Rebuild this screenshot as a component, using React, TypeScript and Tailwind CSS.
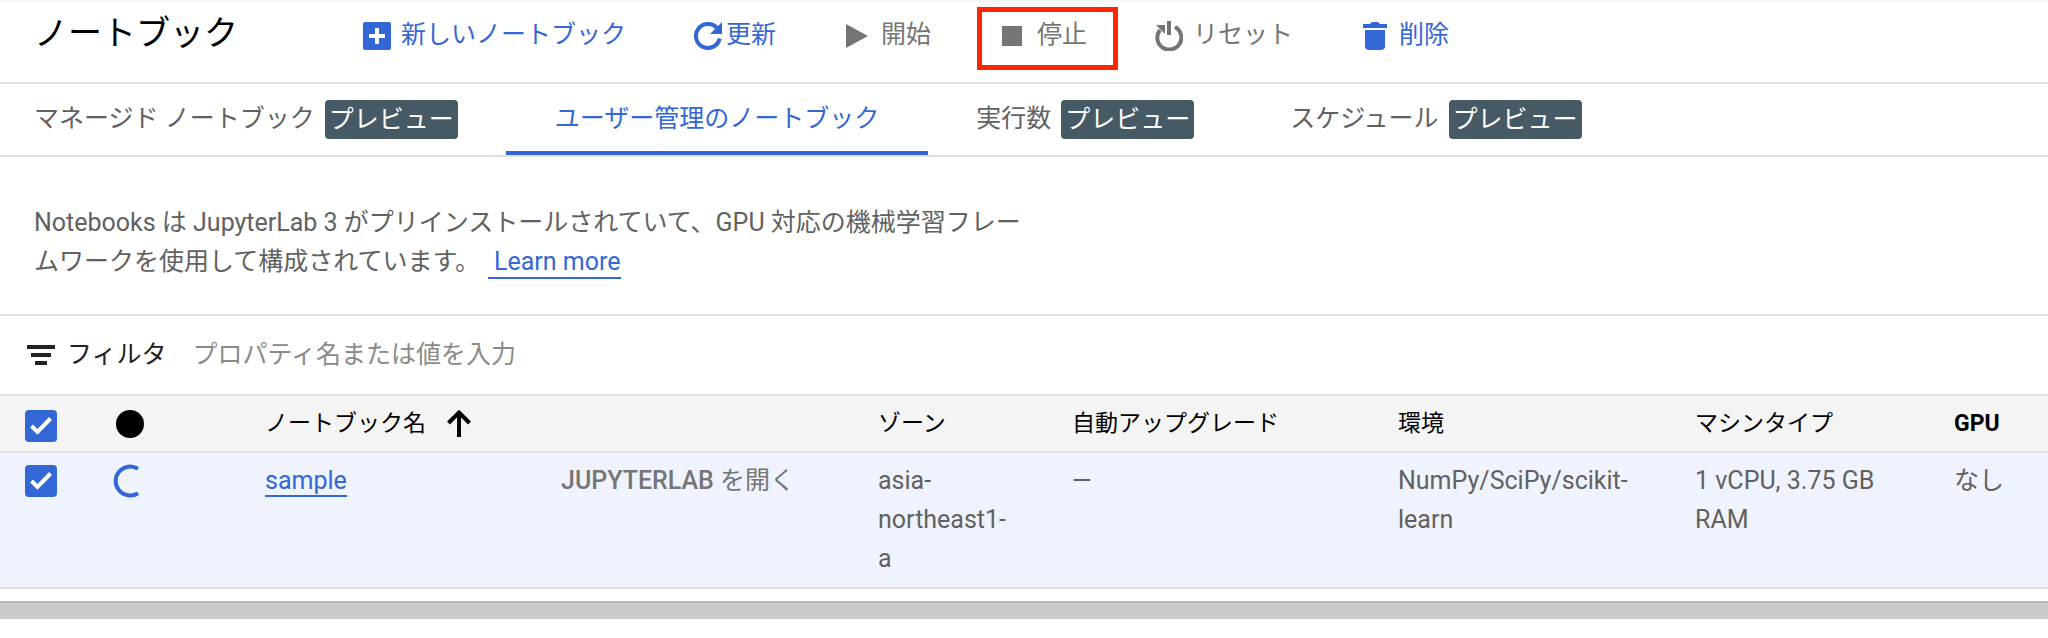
import { useState } from "react";
import type { ReactNode } from "react";

type Tab = {
  id: string;
  label: string;
  preview: boolean;
  className: string;
};

type Notebook = {
  name: string;
  zone: string;
  autoUpgrade: string;
  environment: string;
  machineType: string;
  gpu: string;
};

const TABS: Tab[] = [
  { id: "managed", label: "マネージド ノートブック", preview: true, className: "pl-[34px] pr-12" },
  { id: "user", label: "ユーザー管理のノートブック", preview: false, className: "px-[49px]" },
  { id: "executions", label: "実行数", preview: true, className: "px-12" },
  { id: "schedules", label: "スケジュール", preview: true, className: "px-12" }
];

const NOTEBOOKS: Notebook[] = [
  {
    name: "sample",
    zone: "asia-northeast1-a",
    autoUpgrade: "—",
    environment: "NumPy/SciPy/scikit-learn",
    machineType: "1 vCPU, 3.75 GB RAM",
    gpu: "なし"
  }
];

function AddBoxIcon() {
  return (
    <svg width="28" height="28" viewBox="0 0 28 28" aria-hidden="true">
      <rect width="28" height="28" rx="2" fill="currentColor" />
      <path d="M14 6v16M6 14h16" stroke="#fff" strokeWidth="4" />
    </svg>
  );
}

function RefreshIcon() {
  return (
    <svg width="28" height="28" viewBox="0 0 28 28" aria-hidden="true">
      <path d="M23 6A12 12 0 1 0 25.700 16.500" fill="none" stroke="currentColor" strokeWidth="4" />
      <path d="M28 0v12H16z" fill="currentColor" />
    </svg>
  );
}

function PlayIcon() {
  return (
    <svg width="22" height="24" viewBox="0 0 22 24" fill="currentColor" aria-hidden="true">
      <path d="M0 0l22 12L0 24z" />
    </svg>
  );
}

function StopIcon() {
  return (
    <svg width="20" height="20" viewBox="0 0 20 20" fill="currentColor" aria-hidden="true">
      <path d="M0 0h20v20H0z" />
    </svg>
  );
}

function ResetIcon() {
  return (
    <svg width="28" height="30" viewBox="0 0 28 30" aria-hidden="true">
      <path d="M5 9A12 12 0 1 0 20 6" fill="none" stroke="currentColor" strokeWidth="4" />
      <path d="M1 4h9v9z" fill="currentColor" />
      <path d="M14 0v14" stroke="currentColor" strokeWidth="4" />
    </svg>
  );
}

function DeleteIcon() {
  return (
    <svg width="24" height="28" viewBox="0 0 24 28" fill="currentColor" aria-hidden="true">
      <path d="M0 2h7l2-2h6l2 2h7v4H0z" />
      <path d="M2 8h20v16a4 4 0 0 1-4 4H6a4 4 0 0 1-4-4z" />
    </svg>
  );
}

function FilterIcon() {
  return (
    <svg width="28" height="20" viewBox="0 0 28 20" fill="currentColor" aria-hidden="true">
      <path d="M0 0h28v4H0zM4 8h20v4H4zM8 16h12v4H8z" />
    </svg>
  );
}

function SortIcon() {
  return (
    <svg width="24" height="27" viewBox="0 0 24 27" aria-hidden="true">
      <path d="M12 27V3M1.500 13L12 2.500 22.500 13" fill="none" stroke="currentColor" strokeWidth="4" />
    </svg>
  );
}

function Spinner() {
  return (
    <svg width="32" height="34" viewBox="0 0 32 34" role="img" aria-label="停止中">
      <path d="M25 4.800A14.500 14.500 0 1 0 25 29.200" fill="none" stroke="#3367d6" strokeWidth="4" />
    </svg>
  );
}

function Checkbox({ label, checked, onChange }: { label: string; checked: boolean; onChange: () => void }) {
  return (
    <span className="grid size-8">
      <input
        type="checkbox"
        aria-label={label}
        checked={checked}
        onChange={onChange}
        className="col-start-1 row-start-1 size-8 appearance-none rounded border-2 border-[#757575] bg-white checked:border-[#3367d6] checked:bg-[#3367d6]"
      />
      {checked && (
        <svg viewBox="0 0 32 32" className="pointer-events-none col-start-1 row-start-1 size-8" aria-hidden="true">
          <path d="M6.500 16l6 6L25.500 8.500" fill="none" stroke="#fff" strokeWidth="4" />
        </svg>
      )}
    </span>
  );
}

function ToolbarButton({
  icon,
  label,
  disabled = false,
  className
}: {
  icon: ReactNode;
  label: string;
  disabled?: boolean;
  className: string;
}) {
  return (
    <button
      type="button"
      disabled={disabled}
      className={`flex shrink-0 items-center whitespace-nowrap text-[#3367d6] disabled:text-[#757575] ${className}`}
    >
      {icon}
      <span className="pb-0.5">{label}</span>
    </button>
  );
}

export default function App() {
  const [activeTab, setActiveTab] = useState("user");
  const [filter, setFilter] = useState("");
  const [selected, setSelected] = useState<string[]>(["sample"]);

  const allSelected = selected.length === NOTEBOOKS.length;

  const toggle = (name: string) => {
    setSelected((prev) => (prev.includes(name) ? prev.filter((n) => n !== name) : [...prev, name]));
  };

  return (
    <main className="min-h-screen overflow-x-hidden bg-white font-[Roboto,'Noto_Sans_CJK_JP',sans-serif] text-[25px] leading-[39px] text-[#616161]">
      <header className="flex items-start border-t-2 border-b-2 border-t-[#f6f6f6] border-b-[#e0e0e0] pb-3">
        <h1 className="w-[363px] shrink-0 pt-1 pl-[34px] text-[34px] leading-[54px] whitespace-nowrap text-black">
          ノートブック
        </h1>
        <div className="flex items-start pt-[5px]">
          <div className="flex h-[63px] items-center pb-1.5">
            <ToolbarButton icon={<AddBoxIcon />} label="新しいノートブック" className="gap-[10px]" />
            <ToolbarButton icon={<RefreshIcon />} label="更新" className="ml-[68px] gap-1" />
            <ToolbarButton icon={<PlayIcon />} label="開始" disabled className="ml-[70px] gap-[13px]" />
          </div>
          <div className="ml-[46px] flex h-[63px] items-center border-[5px] border-[#ff2600] pr-[26px] pb-1.5 pl-5">
            <ToolbarButton icon={<StopIcon />} label="停止" disabled className="gap-[15px]" />
          </div>
          <div className="flex h-[63px] items-center pb-1.5">
            <ToolbarButton icon={<ResetIcon />} label="リセット" disabled className="ml-[37px] gap-[10px]" />
            <ToolbarButton icon={<DeleteIcon />} label="削除" className="ml-[70px] gap-3" />
          </div>
        </div>
      </header>

      <nav role="tablist" className="flex h-[73px] border-b-2 border-[#e0e0e0]">
        {TABS.map((tab) => (
          <button
            key={tab.id}
            type="button"
            role="tab"
            aria-selected={tab.id === activeTab}
            onClick={() => setActiveTab(tab.id)}
            className={`flex shrink-0 items-center gap-[10px] border-b-4 pt-1 whitespace-nowrap ${tab.className} ${
              tab.id === activeTab ? "border-[#3367d6] text-[#3367d6]" : "border-transparent"
            }`}
          >
            <span className="pb-0.5">{tab.label}</span>
            {tab.preview && <span className="rounded bg-[#455a64] px-1 text-white">プレビュー</span>}
          </button>
        ))}
      </nav>

      <p className="max-w-[1060px] px-[34px] pt-[46px] pb-[33px]">
        Notebooks は JupyterLab 3 がプリインストールされていて、GPU 対応の機械学習フレームワークを使用して構成されています。
        <a
          href="#learn-more"
          className="ml-2 inline-block border-b-2 border-[#3367d6] pl-1.5 leading-[30px] text-[#3367d6]"
        >
          Learn more
        </a>
      </p>

      <div className="flex h-20 items-center border-t-2 border-[#e0e0e0] pl-[27px]">
        <label htmlFor="filter" className="flex shrink-0 items-center gap-3 text-[#212121]">
          <FilterIcon />
          <span className="pb-0.5">フィルタ</span>
        </label>
        <input
          id="filter"
          type="text"
          value={filter}
          onChange={(e) => setFilter(e.target.value)}
          placeholder="プロパティ名または値を入力"
          className="ml-[26px] min-w-0 flex-1 pb-0.5 outline-none placeholder:text-[#8a8a8a]"
        />
      </div>

      <table className="w-full table-fixed border-collapse text-left">
        <colgroup>
          <col className="w-[113px]" />
          <col className="w-[152px]" />
          <col className="w-[296px]" />
          <col className="w-[317px]" />
          <col className="w-[194px]" />
          <col className="w-[326px]" />
          <col className="w-[297px]" />
          <col className="w-[259px]" />
          <col />
        </colgroup>
        <thead className="border-y-2 border-[#e0e0e0] bg-[#f4f4f4] text-[23px] text-black">
          <tr className="h-[57px] whitespace-nowrap">
            <th className="pt-1 pl-[25px]">
              <Checkbox
                label="すべて選択"
                checked={allSelected}
                onChange={() => setSelected(allSelected ? [] : NOTEBOOKS.map((n) => n.name))}
              />
            </th>
            <th>
              <span className="ml-[3px] block size-7 rounded-full bg-black" />
            </th>
            <th className="font-normal">
              <button type="button" className="flex items-center gap-[21px]">
                ノートブック名
                <SortIcon />
              </button>
            </th>
            <th />
            <th className="font-normal">ゾーン</th>
            <th className="font-normal">自動アップグレード</th>
            <th className="font-normal">環境</th>
            <th className="font-normal">マシンタイプ</th>
            <th className="font-bold">GPU</th>
          </tr>
        </thead>
        <tbody>
          {NOTEBOOKS.map((notebook) => (
            <tr
              key={notebook.name}
              className={`border-b-2 border-[#e0e0e0] align-top ${
                selected.includes(notebook.name) ? "bg-[#eff3fd]" : "bg-white"
              }`}
            >
              <td className="pt-3 pl-[25px]">
                <Checkbox
                  label={notebook.name}
                  checked={selected.includes(notebook.name)}
                  onChange={() => toggle(notebook.name)}
                />
              </td>
              <td className="pt-[11px]">
                <Spinner />
              </td>
              <td className="pt-2">
                <a href="#sample" className="border-b-2 border-[#3367d6] text-[#3367d6]">
                  {notebook.name}
                </a>
              </td>
              <td className="pt-2">
                <button type="button" disabled className="text-[#757575]">
                  <span className="font-medium">JUPYTERLAB</span> を開く
                </button>
              </td>
              <td className="pt-2 pr-14 pb-[9px]">{notebook.zone}</td>
              <td className="pt-2">{notebook.autoUpgrade}</td>
              <td className="pt-2 pr-12">{notebook.environment}</td>
              <td className="pt-2 pr-16">{notebook.machineType}</td>
              <td className="pt-2">{notebook.gpu}</td>
            </tr>
          ))}
        </tbody>
      </table>

      <div className="mt-3 h-[18px] border-t-2 border-[#b8b8b8] bg-[#cbcbcb]" />
    </main>
  );
}
